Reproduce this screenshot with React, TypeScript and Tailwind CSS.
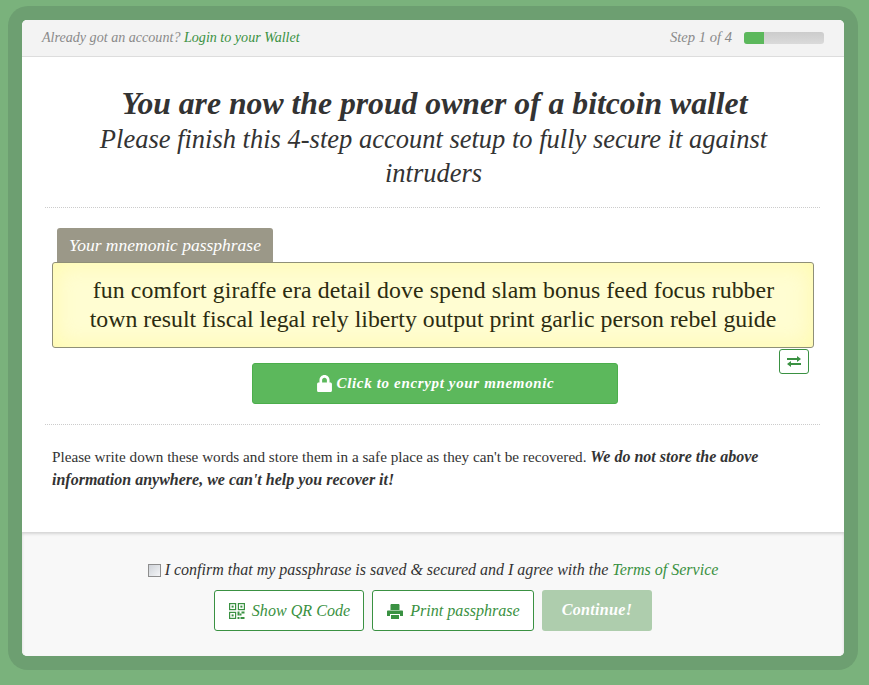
import React from 'react';
import { FaLock } from 'react-icons/fa';

const serif = { fontFamily: '"Liberation Serif", serif' };

const QrIcon = () => (
  <svg width="16" height="16" viewBox="0 0 16 16" fill="none" stroke="currentColor" strokeWidth="1.2">
    <rect x="0.6" y="0.6" width="6" height="6" />
    <rect x="9.4" y="0.6" width="6" height="6" />
    <rect x="0.6" y="9.4" width="6" height="6" />
    <g fill="currentColor" stroke="none">
      <rect x="2.6" y="2.6" width="2" height="2" />
      <rect x="11.4" y="2.6" width="2" height="2" />
      <rect x="2.6" y="11.4" width="2" height="2" />
      <rect x="8.5" y="8.5" width="2" height="4" />
      <rect x="10.5" y="10.5" width="2" height="2" />
      <rect x="12.5" y="8.5" width="3" height="2" />
      <rect x="8.5" y="14" width="2" height="2" />
      <rect x="11.5" y="14" width="4" height="2" />
    </g>
  </svg>
);

const PrintIcon = () => (
  <svg width="16" height="15" viewBox="0 0 16 15" fill="currentColor">
    <path d="M3.5 6V1.2C3.5.5 4 0 4.7 0h6.6c.7 0 1.2.5 1.2 1.2V6z" />
    <path d="M1 6.5h14c.6 0 1 .4 1 1V12h-3v-2H3v2H0V7.5c0-.6.4-1 1-1z" />
    <rect x="4" y="11" width="8" height="4" />
  </svg>
);

const SwapIcon = () => (
  <svg width="14" height="11" viewBox="0 0 14 11" fill="currentColor">
    <path d="M0 2h10V0l4 3-4 3V4H0z" />
    <path d="M14 7H4V5L0 8l4 3V9h10z" />
  </svg>
);

export default function App() {
  return (
    <div style={serif} className="h-[685px] overflow-hidden bg-[#7ab27c] pt-[6px] pl-2 italic">
      <div className="w-[850px] h-[664px] rounded-[20px] bg-[#6d9f71] p-[14px]">
        <div className="relative h-[636px] rounded-[5px] bg-white flex flex-col overflow-hidden">
          {/* top bar */}
          <div className="h-[37px] shrink-0 bg-[#f3f3f3] border-b border-[#dddddd] pl-5 pr-5 flex items-center justify-between text-[14.1px] text-[#8a8a8a]">
            <div>
              Already got an account? <a className="text-[#3a9142]">Login to your Wallet</a>
            </div>
            <div className="flex items-center gap-3">
              <span className="text-[14.6px]">Step 1 of 4</span>
              <div className="w-[80px] h-3 rounded-[3px] bg-[linear-gradient(#cccccc,#dadada)] overflow-hidden">
                <div className="w-[20px] h-full bg-[#5cb85c]"></div>
              </div>
            </div>
          </div>

          {/* body */}
          <div className="flex-1 pl-[23px] pr-[24px]">
            <div className="text-center text-[#333333] pt-[29px] pb-[17px] border-b border-dotted border-[#cccccc]">
              <h1 className="text-[31.7px] leading-[36px] font-bold pl-[4px]">You are now the proud owner of a bitcoin wallet</h1>
              <h2 className="text-[26.5px] leading-[34px] ml-[18px] mr-4">Please finish this 4-step account setup to fully secure it against intruders</h2>
            </div>

            <div className="relative ml-[7px] mr-[6px] mt-5">
              <div className="ml-[5px] w-[216px] h-[34px] rounded-t-[3px] bg-[#9b9888] text-white text-[17.5px] leading-[34px] text-center">
                Your mnemonic passphrase
              </div>
              <div className="h-[86px] rounded-[3px] border border-[#8f8f78] bg-[#fffdd2] shadow-[inset_0_0_24px_rgba(255,250,160,0.8)] not-italic text-[#2c2c10] text-[23.8px] leading-[29px] text-center pt-[13px]">
                <span className="tracking-[0.085px] pl-px">fun comfort giraffe era detail dove spend slam bonus feed focus rubber</span><br />
                town result fiscal legal rely liberty output print garlic person rebel guide
              </div>
              <button className="absolute right-[5px] top-[121px] w-[30px] h-[25px] rounded-[3px] border border-[#3a9142] bg-white text-[#3a9142] flex items-center justify-center">
                <SwapIcon />
              </button>
              <button className="mt-[15px] ml-[200px] w-[366px] h-[41px] rounded-[3px] bg-[#5cb85c] border border-[#4cae4c] text-white font-bold text-[15px] tracking-[0.65px] flex items-center justify-center gap-1">
                <FaLock size={17} />
                Click to encrypt your mnemonic
              </button>
            </div>

            <div className="mt-5 border-t border-dotted border-[#cccccc] px-[7px] pt-[20px] not-italic text-[15.2px] leading-[23px] text-[#333333]">
              Please write down these words and store them in a safe place as they can't be recovered. <b className="italic text-[16px]">We do not store the above information anywhere, we can't help you recover it!</b>
            </div>
          </div>

          {/* footer */}
          <div className="h-[124px] shrink-0 bg-[#f8f8f8] shadow-[inset_0_2px_3px_rgba(0,0,0,0.14)] flex flex-col items-center pt-[29px]">
            <label className="flex items-center text-[16px] leading-[18px] text-[#333333]">
              <input type="checkbox" className="appearance-none w-[13px] h-[13px] mr-1 border border-[#8e8e8e] bg-[linear-gradient(135deg,#cfd3d9,#f4f5f7)]" />
              <span>I confirm that my passphrase is saved &amp; secured and I agree with the <a className="text-[#3a9142]">Terms of Service</a></span>
            </label>
            <div className="mt-[11px] flex gap-2 text-[16.1px]">
              <button className="w-[150px] h-[41px] pt-px pl-px rounded-[3px] border border-[#3a9142] bg-white text-[#3a9142] italic flex items-center justify-center gap-[7px]">
                <QrIcon />
                Show QR Code
              </button>
              <button className="w-[162px] h-[41px] pt-px pl-px rounded-[3px] border border-[#3a9142] bg-white text-[#3a9142] italic flex items-center justify-center gap-[7px]">
                <PrintIcon />
                Print passphrase
              </button>
              <button className="w-[110px] h-[41px] rounded-[3px] bg-[#aecdad] text-white italic font-bold tracking-[0.3px]">
                Continue!
              </button>
            </div>
          </div>
        </div>
      </div>
    </div>
  );
}
